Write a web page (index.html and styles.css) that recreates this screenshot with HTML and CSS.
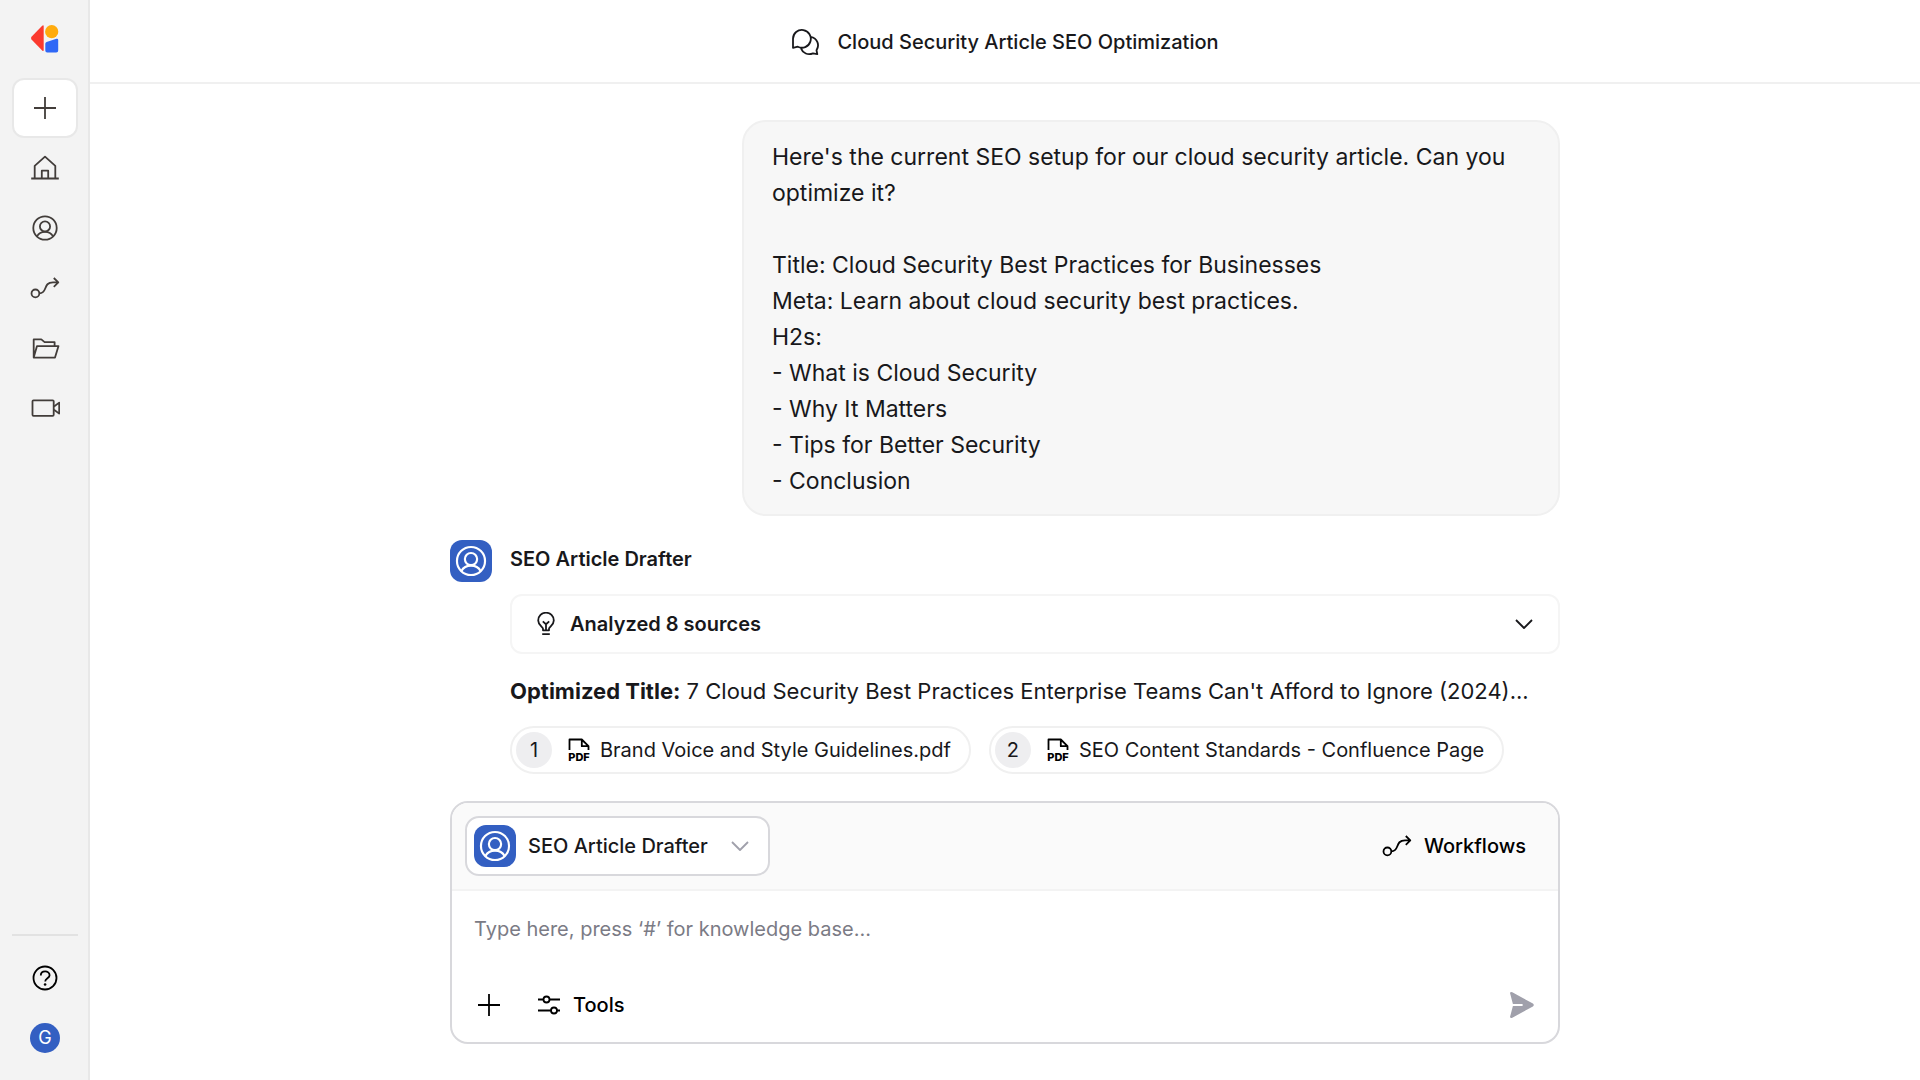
FILE: index.html
```html
<!DOCTYPE html>
<html lang="en">
<head>
<meta charset="utf-8">
<meta name="viewport" content="width=device-width, initial-scale=1">
<title>Cloud Security Article SEO Optimization</title>
<link rel="stylesheet" href="styles.css">
</head>
<body>
<svg class="sprite" aria-hidden="true">
  <symbol id="user" viewBox="0 0 30 30"><circle cx="15" cy="15" r="11.7"/><circle cx="15" cy="13.4" r="5.1"/><path d="M7 23.4c3.200-6 12.800-6 16 0"/></symbol>
  <symbol id="flow" viewBox="0 0 30 30"><circle cx="5.400" cy="20.400" r="3.900"/><path d="M9.400 20.400C18 20.100 12.500 9.400 23 9.400h5M23.800 5l4.500 4.400-4.500 4.400"/></symbol>
  <symbol id="plus" viewBox="0 0 30 30"><path d="M15 4v22M4 15h22"/></symbol>
  <symbol id="chevron" viewBox="0 0 20 20"><path d="M2 6l8 8 8-8"/></symbol>
  <symbol id="pdf" viewBox="0 0 24 24"><path d="M2.500 12V1.500h12.300l6.700 6.700V12M14.800 1.500v6.700h6.700"/><text class="pdf-label" x="12" y="23" text-anchor="middle">PDF</text></symbol>
</svg>

<div class="app">
  <aside class="sidebar">
    <a class="logo" href="#" aria-label="Start page">
      <svg viewBox="0 0 30 30"><path fill="#fb3a2f" d="M13.700 2.500v23.200q0 2-1.500.7L1.500 15.400q-1-1.300 0-2.600L12.200 1.800q1.500-1.300 1.500.7z"/><circle cx="21.700" cy="7.700" r="6.600" fill="#ffab0d"/><path fill="#2f67f6" d="M15.300 19.800q0-1.400 1.300-1.900l9.800-3.100q1.800-.4 1.800 1.300v10.300q0 2-2 2h-9q-1.900 0-1.900-2z"/></svg>
    </a>
    <nav class="nav" aria-label="Main">
      <a class="nav-item new" href="#" aria-label="New chat"><svg class="icon"><use href="#plus"/></svg></a>
      <a class="nav-item" href="#" aria-label="Home"><svg class="icon" viewBox="0 0 30 30"><path d="M1.200 25.500h27.600M4.700 25.500V12.900L15 3.600l10.300 9.300v12.600M11.800 25.500v-7.800h6.400v7.800"/></svg></a>
      <a class="nav-item" href="#" aria-label="Agents"><svg class="icon"><use href="#user"/></svg></a>
      <a class="nav-item" href="#" aria-label="Workflows"><svg class="icon"><use href="#flow"/></svg></a>
      <a class="nav-item" href="#" aria-label="Files"><svg class="icon" viewBox="0 0 30 30"><path d="M3.700 24.600V6.400h7.600l3.300 2.700h10v3.900M7 13.100h21.500L25 24.600H3.700z"/></svg></a>
      <a class="nav-item" href="#" aria-label="Meetings"><svg class="icon" viewBox="0 0 30 30"><rect x="2.500" y="7.300" width="21.200" height="15.500" rx="1"/><path d="M24 13.500l5.200-3.900v11l-5.200-3.900"/></svg></a>
    </nav>
    <div class="sidebar-foot">
      <a class="nav-item help" href="#" aria-label="Help"><svg class="icon" viewBox="0 0 30 30"><circle cx="15" cy="15" r="11.500"/><path d="M10.800 12.400c0-5.400 8.800-5.200 8.800-.2 0 3-4.400 3.100-4.400 6.300"/><circle class="dot" cx="15.100" cy="21.500" r="1.300"/></svg></a>
      <button class="nav-item account" type="button" aria-label="Account"><span class="initial">G</span></button>
    </div>
  </aside>

  <main class="main">
    <header class="topbar">
      <svg class="chat-icon" viewBox="0 0 28 28" aria-hidden="true"><path d="M2 19.800V10.800a8.900 8.900 0 1 1 4.800 7.900zM19.600 8.900c7 1.300 9.200 8.300 5.900 13.300l.8 4-4.300-.8c-5 2-10.200 0-12-5"/></svg>
      <h1 class="title">Cloud Security Article SEO Optimization</h1>
    </header>

    <div class="thread">
      <div class="bubble">Here's the current SEO setup for our cloud security article. Can you optimize it?

Title: Cloud Security Best Practices for Businesses
Meta: Learn about cloud security best practices.
H2s:
- What is Cloud Security
- Why It Matters
- Tips for Better Security
- Conclusion</div>

      <article class="reply">
        <span class="avatar"><svg class="icon"><use href="#user"/></svg></span>
        <div class="reply-body">
          <h2 class="agent-name">SEO Article Drafter</h2>
          <button class="sources" type="button">
            <svg class="bulb" viewBox="0 0 24 24"><path d="M9 18.300v-1.500c0-1.800-4.800-3.300-4.800-8.300a7.800 7.800 0 0 1 15.600 0c0 5-4.800 6.500-4.800 8.300v1.500zM12 18.300v-6.500M8.800 9.400l3.200 2.800 3.200-2.800M8.200 22.200h7.600"/></svg>
            <span>Analyzed 8 sources</span>
            <svg class="chevron"><use href="#chevron"/></svg>
          </button>
          <p class="answer"><strong>Optimized Title:</strong> 7 Cloud Security Best Practices Enterprise Teams Can't Afford to Ignore (2024)...</p>
          <div class="chips">
            <a class="chip" href="#"><span class="num">1</span><svg class="pdf"><use href="#pdf"/></svg>Brand Voice and Style Guidelines.pdf</a>
            <a class="chip" href="#"><span class="num">2</span><svg class="pdf"><use href="#pdf"/></svg>SEO Content Standards - Confluence Page</a>
          </div>
        </div>
      </article>
    </div>

    <form class="composer">
      <div class="composer-head">
        <button class="agent-picker" type="button">
          <span class="avatar"><svg class="icon"><use href="#user"/></svg></span>
          <span>SEO Article Drafter</span>
          <svg class="chevron"><use href="#chevron"/></svg>
        </button>
        <button class="action" type="button"><svg class="icon"><use href="#flow"/></svg>Workflows</button>
      </div>
      <textarea class="prompt" rows="1" aria-label="Message" placeholder="Type here, press ‘#’ for knowledge base..."></textarea>
      <div class="composer-foot">
        <button class="action" type="button" aria-label="Attach"><svg class="icon"><use href="#plus"/></svg></button>
        <button class="action tools" type="button"><svg class="icon" viewBox="0 0 30 30"><path d="M4 9.500h5.500M15.500 9.500H26M4 20.500h13M23 20.500h3"/><circle cx="12.500" cy="9.500" r="3"/><circle cx="20" cy="20.500" r="3"/></svg>Tools</button>
        <button class="send" type="submit" aria-label="Send"><svg viewBox="0 0 30 30"><path d="M6.300 2.200q-1.800-.9-2.300.8L6.900 14h9.700v2H6.900L4 27q.5 1.700 2.300.8l20.600-11.400q1.800-1.400 0-2.800z"/></svg></button>
      </div>
    </form>
  </main>
</div>
</body>
</html>
```
FILE: styles.css
```css
* { box-sizing: border-box; }

body {
  margin: 0;
  background: #fff;
  color: #18181b;
  font-family: Inter, "Liberation Sans", sans-serif;
  font-size: 20px;
  line-height: 30px;
}

button, textarea { font: inherit; color: inherit; }
button { padding: 0; border: 0; background: none; cursor: pointer; }
a { color: inherit; text-decoration: none; }
h1, h2, p { margin: 0; }
svg { display: block; flex: none; fill: none; stroke: none; }

.sprite { display: none; }

.icon, .chevron, .bulb, .chat-icon, .pdf {
  stroke: currentColor;
  stroke-width: 1.8;
  stroke-linejoin: round;
}
.icon { width: 30px; height: 30px; }
.chevron { width: 20px; height: 20px; }

.app { display: flex; min-height: 100vh; }

.sidebar {
  display: flex;
  flex-direction: column;
  width: 90px;
  flex: none;
  background: #f3f3f3;
  border-right: 2px solid #e8e8e8;
  padding: 24px 10px 12px 12px;
}
.logo { align-self: center; }
.logo svg { width: 30px; height: 30px; }
.nav { margin-top: 24px; }
.nav-item {
  display: flex;
  align-items: center;
  justify-content: center;
  width: 100%;
  height: 60px;
  color: #423d3a;
}
.new {
  background: #fff;
  border: 2px solid #e8e8e8;
  border-radius: 12px;
}
.sidebar-foot {
  margin-top: auto;
  border-top: 2px solid #e2e2e2;
  padding-top: 12px;
}
.help { color: #000; }
.dot { fill: currentColor; stroke: none; }
.initial {
  width: 30px;
  height: 30px;
  border-radius: 50%;
  background: #335fc2;
  color: #fff;
  font-size: 18px;
}

.main {
  display: flex;
  flex-direction: column;
  flex: 1;
  min-width: 0;
  padding-bottom: 36px;
}
.topbar {
  display: flex;
  align-items: center;
  justify-content: center;
  gap: 18px;
  height: 84px;
  padding-top: 2px;
  border-bottom: 2px solid #f0f0f0;
}
.chat-icon { width: 28px; height: 28px; }
.title { font-size: 20px; font-weight: 500; }

.thread, .composer {
  width: calc(100% - 48px);
  max-width: 1110px;
  margin: 0 auto;
}
.thread {
  display: flex;
  flex-direction: column;
  flex: 1;
  gap: 24px;
  padding: 36px 0 26px;
}
.bubble {
  align-self: flex-end;
  width: 100%;
  max-width: 818px;
  padding: 17px 28px 15px;
  border: 2px solid #f0f0f0;
  border-radius: 24px;
  background: #f7f7f7;
  font-size: 23px;
  line-height: 36px;
  white-space: pre-wrap;
}

.reply { display: flex; gap: 18px; }
.reply-body { flex: 1; min-width: 0; }
.avatar {
  display: flex;
  align-items: center;
  justify-content: center;
  width: 42px;
  height: 42px;
  flex: none;
  border-radius: 12px;
  background: #335fc2;
  color: #fff;
}
.avatar .icon { width: 36px; height: 36px; }
.agent-name {
  font-size: 20px;
  font-weight: 600;
  line-height: 38px;
}
.sources {
  display: flex;
  align-items: center;
  gap: 12px;
  width: 100%;
  height: 60px;
  margin-top: 16px;
  padding: 0 24px 0 22px;
  border: 2px solid #f5f5f5;
  border-radius: 12px;
  background: #fff;
  font-weight: 600;
}
.bulb { width: 24px; height: 24px; }
.sources .chevron { margin-left: auto; }
.answer {
  margin-top: 19px;
  font-size: 22px;
  line-height: 36px;
}
.chips {
  display: flex;
  flex-wrap: wrap;
  gap: 18px;
  margin-top: 17px;
}
.chip {
  display: flex;
  align-items: center;
  height: 48px;
  padding: 0 18px 0 4px;
  border: 2px solid #f0f0f0;
  border-radius: 24px;
}
.num {
  width: 36px;
  margin-right: 15px;
  border-radius: 50%;
  background: #eeeef0;
  line-height: 36px;
  text-align: center;
}
.pdf { width: 24px; height: 24px; margin-right: 9px; color: #000; }
.pdf-label {
  fill: currentColor;
  stroke: none;
  font-size: 11px;
  font-weight: 800;
}

.composer {
  border: 2px solid #d8d8dc;
  border-radius: 18px;
  overflow: hidden;
}
.composer-head {
  display: flex;
  align-items: center;
  justify-content: space-between;
  padding: 13px 32px 13px 13px;
  border-bottom: 2px solid #f3f3f3;
  background: #fafafa;
}
.agent-picker {
  display: flex;
  align-items: center;
  gap: 12px;
  height: 60px;
  padding: 0 18px 0 7px;
  border: 2px solid #d8d8dc;
  border-radius: 14px;
  background: #fff;
  font-weight: 500;
}
.agent-picker .chevron { margin-left: 10px; color: #a0a0ab; }
.action {
  display: flex;
  align-items: center;
  gap: 12px;
  color: #000;
  font-weight: 500;
}
.tools { gap: 9px; }
.prompt {
  display: block;
  width: 100%;
  height: 66px;
  padding: 23px 22px 0;
  border: 0;
  outline: 0;
  resize: none;
  background: none;
}
.prompt::placeholder { color: #7b7b85; opacity: 1; }
.composer-foot {
  display: flex;
  align-items: center;
  gap: 30px;
  padding: 33px 22px 22px;
}
.send { margin-left: auto; }
.send svg { width: 30px; height: 30px; fill: #a0a0ab; }
```
